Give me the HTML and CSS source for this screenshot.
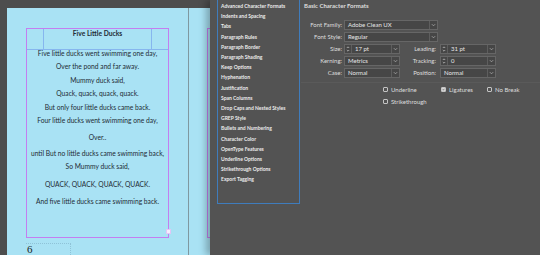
FILE: index.html
```html
<!DOCTYPE html>
<html lang="en">
<head>
  <meta charset="UTF-8" />
  <title>Character Style Options</title>
  <link rel="stylesheet" href="styles.css">
</head>
<body>
  <div class="app">
    <div class="canvas">
      <div class="page">
        <div class="frame">
          <div class="guides"><div class="guide-cols"></div></div>
          <p class="title">Five Little Ducks</p>
          <p class="first">Five little ducks went swimming one day,</p>
          <p>Over the pond and far away.</p>
          <p>Mummy duck said,</p>
          <p>Quack, quack, quack, quack.</p>
          <p>But only four little ducks came back.</p>
          <p>Four little ducks went swimming one day,</p>
          <p class="sp">Over..</p>
          <p class="sp-sm">until But no little ducks came swimming back,</p>
          <p>So Mummy duck said,</p>
          <p class="sp">QUACK, QUACK, QUACK, QUACK.</p>
          <p class="sp">And five little ducks came swimming back.</p>
          <span class="port"></span>
        </div>
        <div class="folio"><span class="num">6</span></div>
      </div>
      <div class="page next">
        <div class="frame2"></div>
      </div>
    </div>

    <div class="panel">
      <ul class="cats">
        <li>Advanced Character Formats</li>
        <li>Indents and Spacing</li>
        <li>Tabs</li>
        <li>Paragraph Rules</li>
        <li>Paragraph Border</li>
        <li>Paragraph Shading</li>
        <li>Keep Options</li>
        <li>Hyphenation</li>
        <li>Justification</li>
        <li>Span Columns</li>
        <li>Drop Caps and Nested Styles</li>
        <li>GREP Style</li>
        <li>Bullets and Numbering</li>
        <li>Character Color</li>
        <li>OpenType Features</li>
        <li>Underline Options</li>
        <li>Strikethrough Options</li>
        <li>Export Tagging</li>
      </ul>

      <div class="form">
        <div class="heading">Basic Character Formats</div>
        <div class="grid">
          <label>Font Family:</label>
          <div class="field wide"><span class="val">Adobe Clean UX</span><span class="drop"><svg viewBox="0 0 6 4"><path d="M1 1l2 2 2-2"/></svg></span></div>

          <label>Font Style:</label>
          <div class="field wide"><span class="val">Regular</span><span class="drop"><svg viewBox="0 0 6 4"><path d="M1 1l2 2 2-2"/></svg></span></div>

          <label>Size:</label>
          <div class="field"><span class="spin"><svg viewBox="0 0 4 8"><path d="M0.8 3L2 1.8 3.2 3M0.8 5L2 6.2 3.2 5"/></svg></span><span class="val">17 pt</span><span class="drop"><svg viewBox="0 0 6 4"><path d="M1 1l2 2 2-2"/></svg></span></div>
          <label class="r">Leading:</label>
          <div class="field"><span class="spin"><svg viewBox="0 0 4 8"><path d="M0.8 3L2 1.8 3.2 3M0.8 5L2 6.2 3.2 5"/></svg></span><span class="val">31 pt</span><span class="drop"><svg viewBox="0 0 6 4"><path d="M1 1l2 2 2-2"/></svg></span></div>

          <label>Kerning:</label>
          <div class="field"><span class="val">Metrics</span><span class="drop"><svg viewBox="0 0 6 4"><path d="M1 1l2 2 2-2"/></svg></span></div>
          <label class="r">Tracking:</label>
          <div class="field"><span class="spin"><svg viewBox="0 0 4 8"><path d="M0.8 3L2 1.8 3.2 3M0.8 5L2 6.2 3.2 5"/></svg></span><span class="val">0</span><span class="drop"><svg viewBox="0 0 6 4"><path d="M1 1l2 2 2-2"/></svg></span></div>

          <label>Case:</label>
          <div class="field"><span class="val">Normal</span><span class="drop"><svg viewBox="0 0 6 4"><path d="M1 1l2 2 2-2"/></svg></span></div>
          <label class="r">Position:</label>
          <div class="field"><span class="val">Normal</span><span class="drop"><svg viewBox="0 0 6 4"><path d="M1 1l2 2 2-2"/></svg></span></div>
        </div>

        <div class="checks">
          <div class="check"><span class="box"></span>Underline</div>
          <div class="check"><span class="box on"><svg viewBox="0 0 6 6"><path d="M1.3 3.1l1.2 1.2 2.2-2.6"/></svg></span>Ligatures</div>
          <div class="check"><span class="box"></span>No Break</div>
          <div class="check"><span class="box"></span>Strikethrough</div>
        </div>
      </div>
    </div>
  </div>
</body>
</html>
```

FILE: styles.css
```css
* {
  box-sizing: border-box;
}

body {
  margin: 0;
  padding: 0;
  background: #535353;
  font-family: 'Lato', sans-serif;
}

.app {
  display: flex;
  width: 540px;
  height: 255px;
  overflow: hidden;
}

/* document canvas */
.canvas {
  width: 210px;
  flex-shrink: 0;
  display: flex;
  background: #4d4d4d;
  padding: 8px 0 0 7px;
  overflow: hidden;
}

.page {
  width: 182px;
  flex-shrink: 0;
  background: #a9e2f4;
  border-right: 1px solid #7f98a0;
  padding: 20px 0 0 19px;
}

.page.next {
  width: 21px;
  border-right: none;
  padding: 20px 0 0 18px;
  overflow: hidden;
}

.frame {
  position: relative;
  width: 143px;
  height: 210px;
  border: 1px solid #c37ef0;
  color: #232c35;
  font-size: 6.7px;
  text-align: center;
}

.frame2 {
  width: 40px;
  height: 210px;
  border: 1px solid #c37ef0;
}

.guides {
  position: absolute;
  left: 0;
  top: 0;
  right: 0;
  height: 21px;
  border-bottom: 1px solid #86b6ee;
}

.guide-cols {
  margin-left: 16px;
  width: 109px;
  height: 100%;
  border-left: 1px solid #86b6ee;
  border-right: 1px solid #86b6ee;
}

.frame p {
  position: relative;
  margin: 0;
  line-height: 13.4px;
  white-space: nowrap;
}

.frame .title {
  font-weight: bold;
  line-height: 8px;
  margin-top: 0;
}

.frame .first {
  margin-top: 10px;
}

.frame .sp {
  margin-top: 4px;
}

.frame .sp-sm {
  margin-top: 2px;
}

.port {
  position: absolute;
  right: -3px;
  bottom: 3px;
  width: 5px;
  height: 5px;
  background: #f4eefc;
  border: 1px solid #e2c6f6;
}

.folio {
  margin-top: 5px;
  width: 45px;
  height: 12px;
  border-top: 1px dotted #8fc3d8;
  border-right: 1px dotted #8fc3d8;
}

.num {
  display: block;
  font-family: 'Liberation Serif', serif;
  font-size: 11px;
  line-height: 10px;
  color: #1b1f22;
  padding-left: 1px;
}

/* options panel */
.panel {
  position: relative;
  flex: 1;
  display: flex;
  background: #535353;
  box-shadow: -4px 0 7px rgba(0, 0, 0, 0.28);
}

.cats {
  list-style: none;
  margin: 0 0 0 7px;
  padding: 1px 0 0 3px;
  width: 83px;
  height: 204px;
  border: 1px solid #3f7cbc;
  border-top: none;
}

.cats li {
  font-size: 5px;
  line-height: 10.2px;
  color: #ececec;
  white-space: nowrap;
  font-weight: bold;
}

.form {
  flex: 1;
  padding-left: 1px;
  color: #dedede;
  font-size: 6px;
}

.heading {
  line-height: 12px;
  padding-left: 3px;
  font-weight: bold;
}

.grid {
  display: grid;
  grid-template-columns: 41px 56px 36px 56px;
  grid-auto-rows: 10px;
  column-gap: 2px;
  row-gap: 2px;
  margin-top: 8px;
}

.grid label {
  grid-column: 1;
  text-align: right;
  line-height: 10px;
  white-space: nowrap;
}

.grid label.r {
  grid-column: 3;
  padding-right: 2px;
}

.field {
  display: flex;
  align-items: stretch;
  background: #464646;
  border: 1px solid #666666;
  line-height: 8px;
  font-size: 6px;
  color: #e6e6e6;
}

.field.wide {
  grid-column: 2 / 4;
}

.val {
  flex: 1;
  padding-left: 3px;
  white-space: nowrap;
}

.spin {
  width: 7px;
  border-right: 1px solid #5e5e5e;
  display: flex;
  align-items: center;
  justify-content: center;
}

.spin svg {
  width: 4px;
  height: 8px;
}

.drop {
  width: 8px;
  border-left: 1px solid #5e5e5e;
  display: flex;
  align-items: center;
  justify-content: center;
}

.drop svg {
  width: 5px;
  height: 4px;
}

.spin path,
.drop path {
  fill: none;
  stroke: #bdbdbd;
  stroke-width: 0.8;
}

.checks {
  display: grid;
  grid-template-columns: 58px 46px 40px;
  grid-auto-rows: 12px;
  margin-top: 4px;
  padding: 0 0 0 82px;
  border-top: 1px solid #5a5a5a;
}

.check {
  display: flex;
  align-items: center;
  gap: 3px;
  font-size: 6px;
  white-space: nowrap;
}

.box {
  display: flex;
  width: 5px;
  height: 5px;
  border: 1px solid #c4c4c4;
  border-radius: 1px;
}

.box.on {
  background: #d8d8d8;
}

.box svg {
  width: 100%;
  height: 100%;
}

.box path {
  fill: none;
  stroke: #3a3a3a;
  stroke-width: 1.1;
}
```
